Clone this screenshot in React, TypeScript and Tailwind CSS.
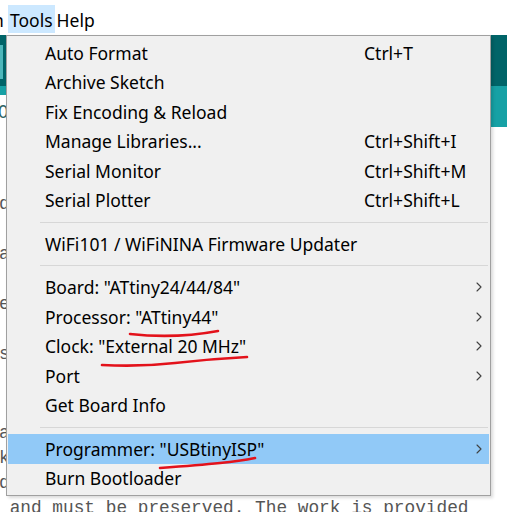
import { ChevronRight } from 'lucide-react';

type Item =
  | { kind: 'sep' }
  | { kind: 'item'; label: string; shortcut?: string; submenu?: boolean; active?: boolean };

const items: Item[] = [
  { kind: 'item', label: 'Auto Format', shortcut: 'Ctrl+T' },
  { kind: 'item', label: 'Archive Sketch' },
  { kind: 'item', label: 'Fix Encoding & Reload' },
  { kind: 'item', label: 'Manage Libraries...', shortcut: 'Ctrl+Shift+I' },
  { kind: 'item', label: 'Serial Monitor', shortcut: 'Ctrl+Shift+M' },
  { kind: 'item', label: 'Serial Plotter', shortcut: 'Ctrl+Shift+L' },
  { kind: 'sep' },
  { kind: 'item', label: 'WiFi101 / WiFiNINA Firmware Updater' },
  { kind: 'sep' },
  { kind: 'item', label: 'Board: "ATtiny24/44/84"', submenu: true },
  { kind: 'item', label: 'Processor: "ATtiny44"', submenu: true },
  { kind: 'item', label: 'Clock: "External 20 MHz"', submenu: true },
  { kind: 'item', label: 'Port', submenu: true },
  { kind: 'item', label: 'Get Board Info' },
  { kind: 'sep' },
  { kind: 'item', label: 'Programmer: "USBtinyISP"', submenu: true, active: true },
  { kind: 'item', label: 'Burn Bootloader' },
];

// editor lines peeking out from under the menu (only the first char shows)
const codeLines = [
  { top: 192, text: 'd' },
  { top: 242, text: 'a' },
  { top: 292, text: 'e' },
  { top: 342, text: 's' },
  { top: 421, text: 'a' },
  { top: 446, text: 'k' },
  { top: 471, text: 'd' },
];

export default function App() {
  return (
    <div className="relative w-[507px] h-[512px] overflow-hidden bg-white" style={{ fontFamily: '"Noto Sans", "Open Sans", sans-serif' }}>
      {/* menu bar */}
      <div className="h-[35px] flex items-start pt-[5px] text-[17.5px] text-black">
        <span className="-ml-[7px] w-[15px] h-[28px] pt-[2px]">n</span>
        <span className="h-[28px] px-[2px] pt-[2px] bg-[#cce8ff]">Tools</span>
        <span className="ml-[2px] h-[28px] pt-[2px]">Help</span>
      </div>

      {/* toolbar + tabs */}
      <div className="h-[51px] bg-[#006468] flex items-start">
        <div className="mt-[10px] w-[3px] h-[34px] bg-[#4db7bb]" />
      </div>
      <div className="h-[41px] bg-[#17a1a5] flex items-end">
        <div className="w-[40px] h-[32px] bg-white text-[#2c6466] text-[18px] flex items-center -ml-[30px]">
          <span className="ml-[28px]">0</span>
        </div>
      </div>

      {/* editor text */}
      <div className="relative text-[#555] text-[17.8px]" style={{ fontFamily: '"Liberation Mono", monospace' }}>
        {codeLines.map((l, i) => (
          <div key={i} className="absolute left-[-1px] leading-[25px] whitespace-pre" style={{ top: l.top - 127 }}>
            {l.text}
          </div>
        ))}
        <div className="absolute left-[-1px] top-[369px] leading-[25px] whitespace-pre">
          {' and must be preserved. The work is provided'}
        </div>
      </div>

      {/* Tools dropdown */}
      <div className="absolute left-[6px] top-[35px] w-[485px] h-[461px] bg-[#f0f0f0] border border-[#a0a0a0] pt-[2px] text-[17.5px] text-black shadow-[2px_2px_3px_rgba(0,0,0,0.15)]">
        {items.map((it, i) =>
          it.kind === 'sep' ? (
            <div key={i} className="h-[14px] flex items-center pl-[33px] pr-[2px]">
              <div className="h-px w-full bg-[#d7d7d7]" />
            </div>
          ) : (
            <div
              key={i}
              className={`h-[29.5px] mx-[1px] flex items-center pl-[37px] pr-[2px] ${it.active ? 'bg-[#91c9f7]' : ''}`}
            >
              <span className="w-[319px] whitespace-nowrap">{it.label}</span>
              <span className="flex-1 whitespace-nowrap">{it.shortcut}</span>
              {it.submenu && <ChevronRight className="w-4 h-4 text-[#404040]" strokeWidth={1.6} />}
            </div>
          )
        )}
      </div>

      {/* red hand-drawn underlines */}
      <svg className="absolute inset-0 pointer-events-none" width="507" height="512">
        <g fill="none" stroke="#e3121b" strokeWidth="2.6" strokeLinecap="round">
          <path d="M130 334 Q175 339 218 331" />
          <path d="M102 365 Q140 367 175 363 T247 357" />
          <path d="M160 468 Q200 465 220 463 T255 458" />
        </g>
      </svg>
    </div>
  );
}
